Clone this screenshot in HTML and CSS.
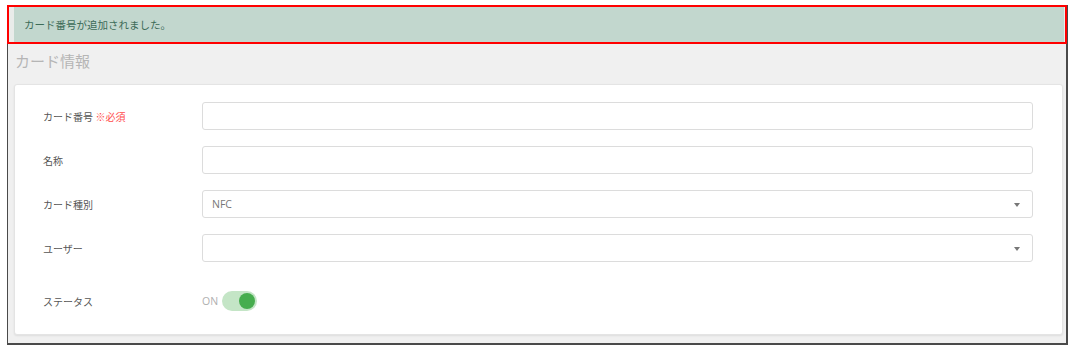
FILE: index.html
```html
<!DOCTYPE html>
<html lang="ja">
<head>
  <meta charset="UTF-8" />
  <title>カード情報</title>
  <link rel="stylesheet" href="styles.css">
</head>
<body>
  <div class="frame">
    <div class="highlight">
      <div class="alert">カード番号が追加されました。</div>
    </div>

    <div class="page">
      <h2 class="page-title">カード情報</h2>

      <div class="card">
        <div class="form-row">
          <label>カード番号 <span class="required">※必須</span></label>
          <div class="field"><input type="text"></div>
        </div>
        <div class="form-row">
          <label>名称</label>
          <div class="field"><input type="text"></div>
        </div>
        <div class="form-row">
          <label>カード種別</label>
          <div class="field select">NFC<span class="caret"></span></div>
        </div>
        <div class="form-row">
          <label>ユーザー</label>
          <div class="field select"><span class="caret"></span></div>
        </div>
        <div class="form-row status-row">
          <label>ステータス</label>
          <div class="switch">
            <span class="switch-text">ON</span>
            <span class="track"><span class="thumb"></span></span>
          </div>
        </div>
      </div>
    </div>
  </div>
</body>
</html>
```

FILE: styles.css
```css
body {
  margin: 0;
  background: #fff;
  font-family: "Open Sans", "Noto Sans CJK JP", sans-serif;
  color: #555;
}

.frame {
  margin: 5px 0 0 7px;
  width: 1058px;
  height: 338px;
  border-right: 2px solid #4a4a4a;
  border-bottom: 2px solid #4a4a4a;
  border-left: 1px solid #4a4a4a;
  background: #f0f0f0;
  display: flex;
  flex-direction: column;
}

.highlight {
  border: 2px solid #ff0000;
  margin-left: -1px;
  margin-right: -1px;
  padding: 0 1px 0 5px;
  background: #e9ecea;
}

.alert {
  background: #c2d7ce;
  color: #3d6b58;
  font-size: 10.5px;
  height: 35px;
  line-height: 37px;
  padding-left: 10px;
}

.page {
  padding: 0 3px 0 6px;
}

.page-title {
  margin: 0;
  padding: 6px 0 0 1px;
  height: 34px;
  font-size: 15px;
  font-weight: normal;
  color: #b5b5b5;
  line-height: 22px;
}

.card {
  background: #fff;
  border: 1px solid #e4e4e4;
  border-radius: 3px;
  box-shadow: 0 1px 2px rgba(0, 0, 0, 0.08);
  padding: 17px 29px 19px 28px;
  display: flex;
  flex-direction: column;
  gap: 16px;
}

.form-row {
  display: flex;
  align-items: center;
  height: 28px;
}

.form-row label {
  width: 159px;
  flex: none;
  font-size: 10px;
  color: #555;
}

.required {
  color: #ff4d4d;
}

.field {
  flex: 1;
  height: 28px;
  box-sizing: border-box;
  border: 1px solid #dcdcdc;
  border-radius: 3px;
  background: #fff;
  position: relative;
}

.field input {
  border: none;
  width: 100%;
  height: 100%;
  background: transparent;
  outline: none;
}

.select {
  font-size: 10.5px;
  color: #777;
  line-height: 26px;
  padding-left: 9px;
}

.caret {
  position: absolute;
  right: 12px;
  top: 12px;
  border-left: 3.5px solid transparent;
  border-right: 3.5px solid transparent;
  border-top: 4px solid #777;
}

.status-row {
  margin-top: 9px;
}

.switch {
  display: flex;
  align-items: center;
  gap: 4px;
}

.switch-text {
  font-size: 10.5px;
  color: #b0b0b0;
}

.track {
  width: 35px;
  height: 20px;
  border-radius: 10px;
  background: #c4e5c6;
  position: relative;
}

.thumb {
  position: absolute;
  right: 2px;
  top: 2px;
  width: 16px;
  height: 16px;
  border-radius: 50%;
  background: #46ad4e;
}
```
